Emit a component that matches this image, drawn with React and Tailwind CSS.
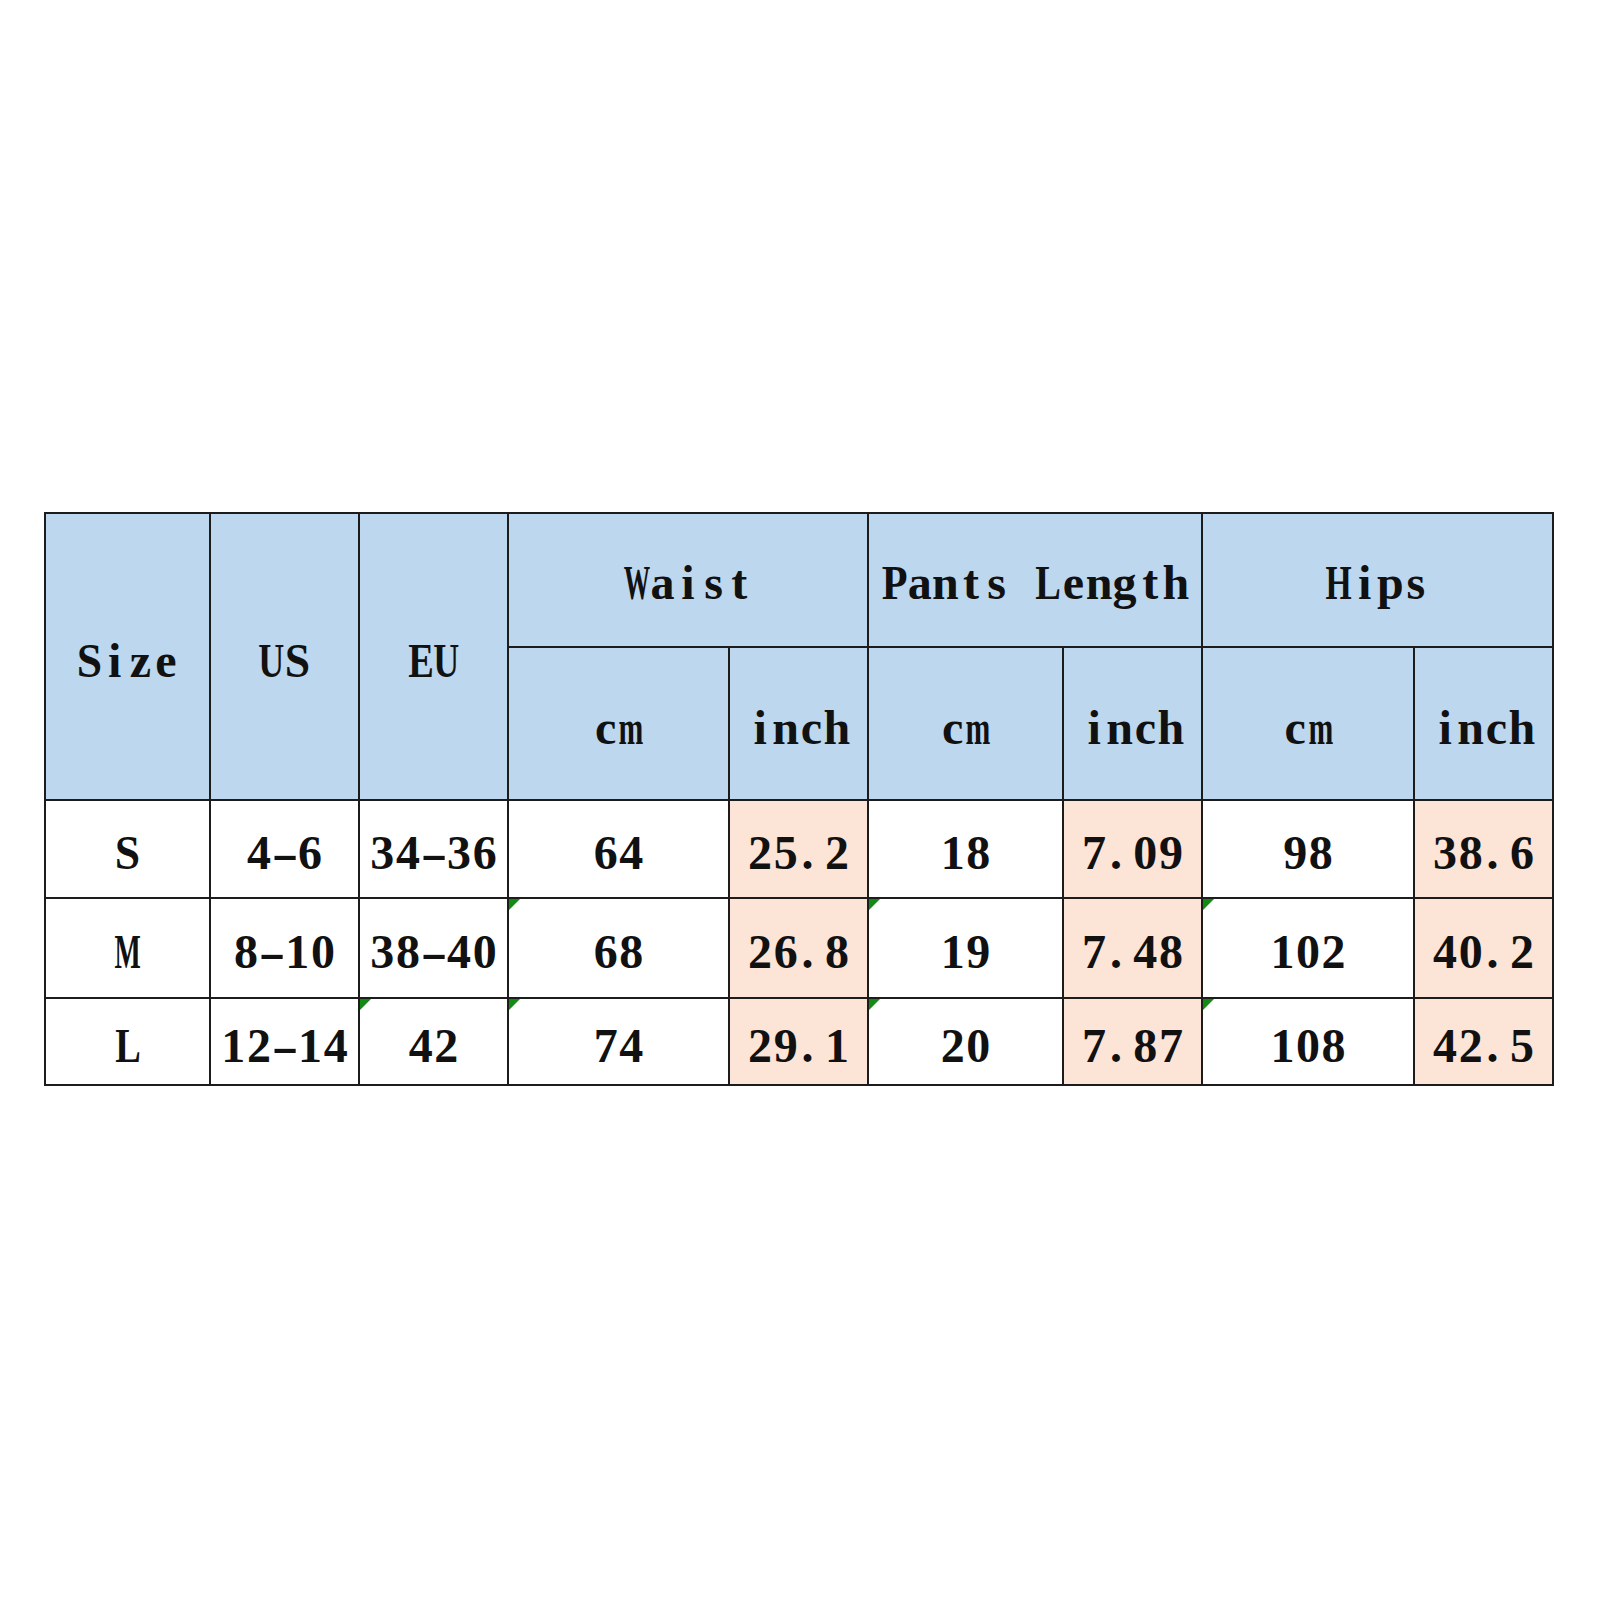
import React from 'react'

const rows = [
  { size: 'S', us: '4-6', eu: '34-36', wc: '64', wi: '25.2', pc: '18', pi: '7.09', hc: '98', hi: '38.6', marks: [] },
  { size: 'M', us: '8-10', eu: '38-40', wc: '68', wi: '26.8', pc: '19', pi: '7.48', hc: '102', hi: '40.2', marks: ['wc', 'pc', 'hc'] },
  { size: 'L', us: '12-14', eu: '42', wc: '74', wi: '29.1', pc: '20', pi: '7.87', hc: '108', hi: '42.5', marks: ['eu', 'wc', 'pc', 'hc'] },
]

const keys = ['size', 'us', 'eu', 'wc', 'wi', 'pc', 'pi', 'hc', 'hi']
const peach = ['wi', 'pi', 'hi']

// squeeze wide serif glyphs into the half-width cell, like SimSun does
const squeeze = {
  m: 'scale-x-[0.62]',
  W: 'scale-x-[0.55]',
  M: 'scale-x-[0.58]',
  H: 'scale-x-[0.7]',
  U: 'scale-x-[0.75]',
  E: 'scale-x-[0.8]',
  L: 'scale-x-[0.8]',
  P: 'scale-x-[0.88]',
  S: 'scale-x-[0.95]',
  '-': 'scale-x-[1.7]',
}

function Mono({ text }) {
  return (
    <span className="inline-flex">
      {text.split('').map((ch, i) => (
        <span
          key={i}
          className={`inline-flex w-[25.6px] ${ch === '.' ? 'justify-start pl-[3px]' : 'justify-center'}`}
        >
          <span className={`inline-block ${squeeze[ch] || ''}`}>{ch === ' ' ? '\u00a0' : ch}</span>
        </span>
      ))}
    </span>
  )
}

function Cell({ text, className = '', mark }) {
  return (
    <div className={`relative flex items-center justify-center ${className}`}>
      {/* Excel error indicator */}
      {mark && (
        <svg className="absolute left-0 top-0" width="11" height="11" viewBox="0 0 11 11">
          <polygon points="0,0 11,0 0,11" fill="#138a13" />
        </svg>
      )}
      <span className="pt-[8px]">
        <Mono text={text} />
      </span>
    </div>
  )
}

export default function App() {
  const head = 'bg-[#bdd7ee]'
  return (
    <div className="min-h-[1600px] w-[1600px] bg-white pl-[44px] pt-[512px]">
      <div
        className="inline-grid gap-[2px] bg-[#1c1c1c] p-[2px] text-[48px] font-bold leading-none text-[#111]"
        style={{
          fontFamily: '"Liberation Serif", "Times New Roman", serif',
          gridTemplateColumns: '163px 147px 147px 219px 137px 193px 137px 210px 137px',
          gridTemplateRows: '132px 151px 96px 98px 85px',
        }}
      >
        <Cell className={`${head} row-span-2`} text="Size" />
        <Cell className={`${head} row-span-2`} text="US" />
        <Cell className={`${head} row-span-2`} text="EU" />
        <Cell className={`${head} col-span-2 !items-start pt-[37px]`} text="Waist" />
        <Cell className={`${head} col-span-2 !items-start pt-[37px]`} text="Pants Length" />
        <Cell className={`${head} col-span-2 !items-start pt-[37px]`} text="Hips" />
        <Cell className={head} text="cm" />
        <Cell className={head} text="inch" />
        <Cell className={head} text="cm" />
        <Cell className={head} text="inch" />
        <Cell className={head} text="cm" />
        <Cell className={head} text="inch" />

        {rows.map(r =>
          keys.map(k => (
            <Cell
              key={r.size + k}
              mark={r.marks.includes(k)}
              className={peach.includes(k) ? 'bg-[#fce4d6]' : 'bg-white'}
              text={r[k]}
            />
          ))
        )}
      </div>
    </div>
  )
}
